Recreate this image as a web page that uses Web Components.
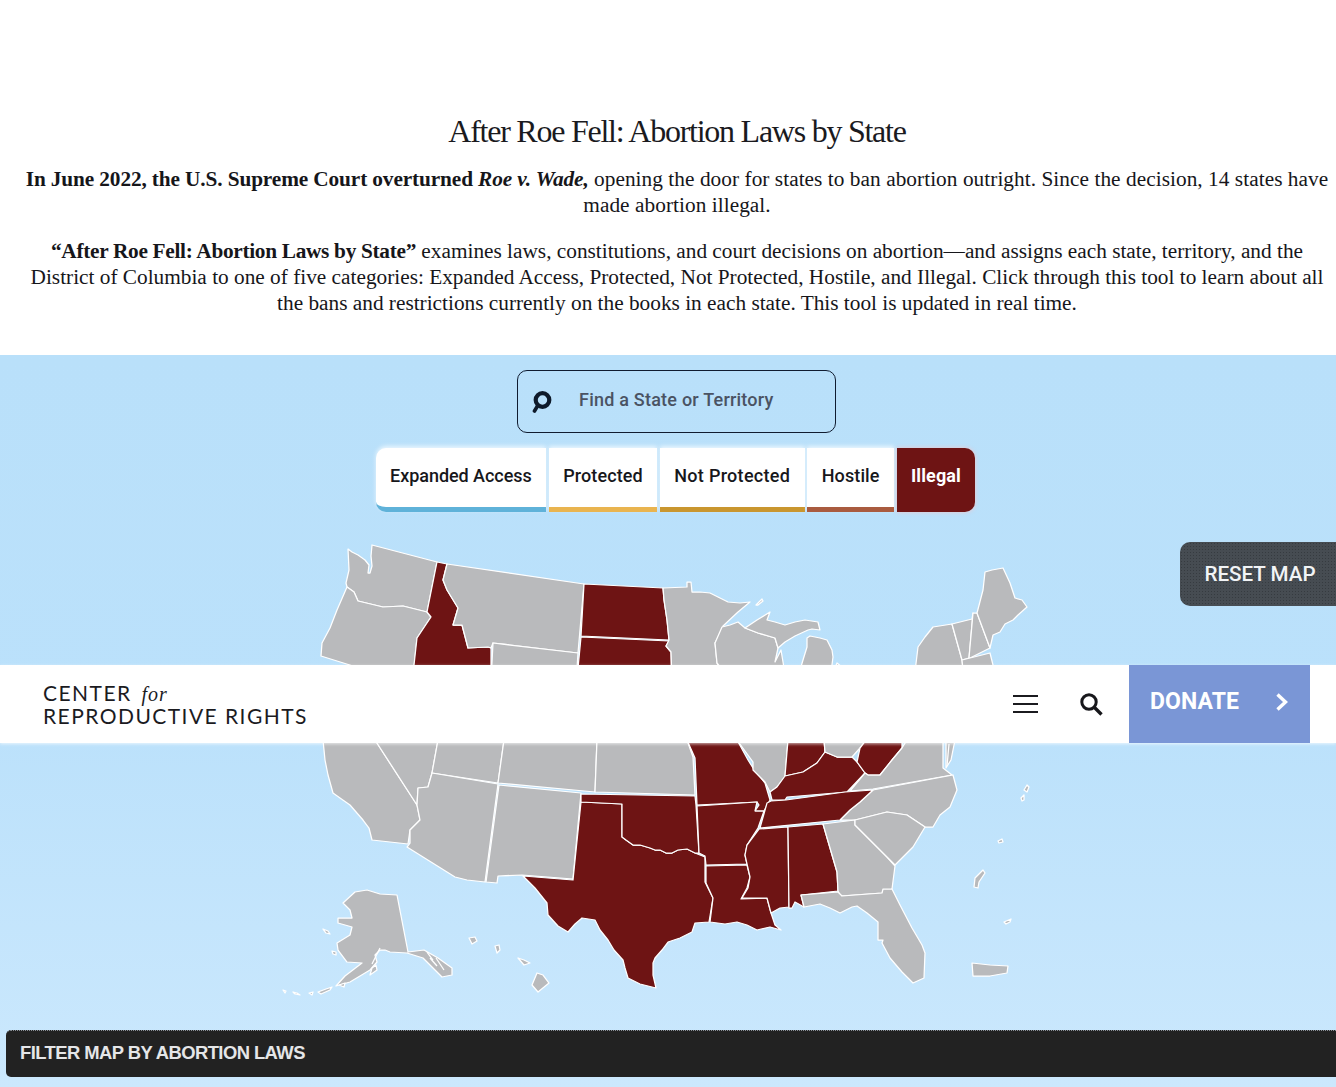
<!DOCTYPE html>
<html lang="en">
<head>
<meta charset="utf-8">
<title>After Roe Fell: Abortion Laws by State</title>
<style>
  html, body { margin: 0; background: #fff; }
  body { position: relative; height: 1087px; overflow: hidden; }
  intro-block p:first-of-type { letter-spacing: .05px; }
  intro-block p:first-of-type b { letter-spacing: -.12px; }
  intro-block p:last-of-type b { letter-spacing: -.3px; }
</style>
</head>
<body>
<intro-block>
  <span slot="title">After Roe Fell: Abortion Laws by State</span>
  <p><b>In June 2022, the U.S. Supreme Court overturned <i>Roe v. Wade,</i></b> opening the door for states to ban abortion outright. Since the decision, 14 states have made abortion illegal.</p>
  <p><b>“After Roe Fell: Abortion Laws by State”</b> examines laws, constitutions, and court decisions on abortion—and assigns each state, territory, and the<br>District of Columbia to one of five categories: Expanded Access, Protected, Not Protected, Hostile, and Illegal. Click through this tool to learn about all the bans and restrictions currently on the books in each state. This tool is updated in real time.</p>
</intro-block>
<map-section>
  <us-map slot="canvas"></us-map>
  <reset-button slot="overlay">RESET MAP</reset-button>
  <search-box placeholder="Find a State or Territory"></search-box>
  <filter-tabs>
    <filter-tab color="#5fb2d9" first>Expanded Access</filter-tab>
    <filter-tab color="#e9b44f">Protected</filter-tab>
    <filter-tab color="#c9962f" wide>Not Protected</filter-tab>
    <filter-tab color="#a95b3f">Hostile</filter-tab>
    <filter-tab color="#6e1414" active>Illegal</filter-tab>
  </filter-tabs>
  <filter-bar slot="footer">FILTER MAP BY ABORTION LAWS</filter-bar>
</map-section>
<site-header></site-header>

<script>
const SANS = '"Roboto", "Liberation Sans", sans-serif';

class IntroBlock extends HTMLElement {
  connectedCallback() {
    this.attachShadow({ mode: "open" }).innerHTML = `
      <style>
        :host { display: block; height: 355px; box-sizing: border-box; padding: 112px 6px 0 24px; text-align: center;
          font: 21.3px/26px "Liberation Serif", serif; color: #16161a; }
        h1 { margin: 0 0 16px; font: 400 32px/38px "Liberation Serif", serif; letter-spacing: -1.25px; color: #1a1a1e; }
        ::slotted(p) { margin: 0 0 20px; }
      </style>
      <h1><slot name="title"></slot></h1>
      <slot></slot>`;
  }
}

class MapSection extends HTMLElement {
  connectedCallback() {
    this.attachShadow({ mode: "open" }).innerHTML = `
      <style>
        :host { display: flex; flex-direction: column; position: relative; height: 732px;
          padding-top: 15px; box-sizing: border-box; background: linear-gradient(#b9e0fa 0%, #bbe1fb 50%, #cbe8fd 100%); }
        .content { position: relative; display: flex; flex-direction: column; align-items: center; gap: 15px; padding-left: 17px; }
        .footer { position: relative; margin-top: auto; padding: 0 0 10px 6px; }
      </style>
      <slot name="canvas"></slot>
      <slot name="overlay"></slot>
      <div class="content"><slot></slot></div>
      <div class="footer"><slot name="footer"></slot></div>`;
  }
}

class SearchBox extends HTMLElement {
  connectedCallback() {
    this.attachShadow({ mode: "open" }).innerHTML = `
      <style>
        :host { display: flex; align-items: center; gap: 27px; width: 319px; height: 63px; box-sizing: border-box;
          padding: 0 0 4px 13px; border: 1px solid #101c30; border-radius: 10px; }
        svg { flex: none; display: block; margin-top: 4px; }
        span { font: 500 18px/20px ${SANS}; letter-spacing: .22px; color: #4a5363; }
      </style>
      <svg width="21" height="22" viewBox="0 0 21 22">
        <circle cx="11.5" cy="9" r="6.8" fill="none" stroke="#0e1a2a" stroke-width="4.2"/>
        <path d="M6.5 15 3.5 20" stroke="#0e1a2a" stroke-width="3.6" stroke-linecap="round"/>
      </svg>
      <span>${this.getAttribute("placeholder")}</span>`;
  }
}

class FilterTabs extends HTMLElement {
  connectedCallback() {
    this.attachShadow({ mode: "open" }).innerHTML = `
      <style>:host { display: flex; gap: 2.5px; margin-left: -2px; }</style><slot></slot>`;
  }
}

class FilterTab extends HTMLElement {
  connectedCallback() {
    const color = this.getAttribute("color");
    const active = this.hasAttribute("active");
    const first = this.hasAttribute("first");
    this.attachShadow({ mode: "open" }).innerHTML = `
      <style>
        :host { display: flex; align-items: center; height: 64px; box-sizing: border-box; padding: 0 14.5px 4px;
          font: 500 18px/20px ${SANS}; letter-spacing: .1px;
          background: ${active ? color : "#fff"}; color: ${active ? "#fff" : "#17171b"};
          border-bottom: ${active ? "0" : `5px solid ${color}`};
          border-radius: ${first ? "10px 0 0 10px" : active ? "0 10px 10px 0" : "0"};
          box-shadow: ${active ? "0 0 4px rgba(255,190,190,.8)" : "0 -2px 4px rgba(255,255,255,.7)"}; }
        :host([first]) { padding: 0 14.5px 4px; letter-spacing: -.05px; }
        :host([wide]) { letter-spacing: .3px; }
        :host([active]) { padding-bottom: 8px; font-weight: 700; letter-spacing: .1px; }
      </style>
      <slot></slot>`;
  }
}

class ResetButton extends HTMLElement {
  connectedCallback() {
    this.attachShadow({ mode: "open" }).innerHTML = `
      <style>
        :host { position: absolute; top: 187px; right: 0; display: flex; align-items: center; justify-content: center;
          width: 156px; height: 64px; padding-left: 4px; box-sizing: border-box; border-radius: 10px 0 0 10px;
          font: 500 20.6px/24px ${SANS}; color: #f2f4f6; background-color: #464c52;
          background-image: radial-gradient(#363b40 .8px, transparent 1px); background-size: 3px 3px; }
      </style>
      <slot></slot>`;
  }
}

class FilterBar extends HTMLElement {
  connectedCallback() {
    this.attachShadow({ mode: "open" }).innerHTML = `
      <style>
        :host { display: flex; align-items: center; height: 47px; box-sizing: border-box; padding: 0 0 2px 14px;
          border-top: 1px dotted #8a9097; border-radius: 5px 0 0 5px; background: #222;
          font: 700 18.4px/22px "Liberation Sans", sans-serif; letter-spacing: -.55px; color: #e5e6e8; }
      </style>
      <slot></slot>`;
  }
}

class SiteHeader extends HTMLElement {
  connectedCallback() {
    this.attachShadow({ mode: "open" }).innerHTML = `
      <style>
        :host { position: absolute; top: 665px; left: 0; right: 0; height: 78px; display: flex; align-items: stretch;
          background: #fff; box-shadow: 0 1px 3px rgba(255,255,255,.7); }
        .logo { flex: 1; padding: 16px 0 0 43px; font: 400 21px/23px "Lato", "Noto Sans", sans-serif; letter-spacing: 1.45px; color: #1b1b1f; }
        .logo i { font: italic 20px/20px "Liberation Serif", serif; letter-spacing: 1px; margin-left: 3px; }
        .tools { display: flex; align-items: center; gap: 41px; margin-right: 26px; }
        .burger { display: flex; flex-direction: column; gap: 5.5px; width: 25px; }
        .burger span { height: 2.2px; background: #1b1b1f; }
        svg { display: block; }
        .donate { display: flex; align-items: center; justify-content: space-between; box-sizing: border-box; width: 181px;
          margin-right: 26px; padding: 0 21px 4px 21px; background: #7a96d6; color: #fff;
          font: 700 23px/26px ${SANS}; letter-spacing: .1px; }
      </style>
      <div class="logo">CENTER <i>for</i><br>REPRODUCTIVE RIGHTS</div>
      <div class="tools">
        <div class="burger"><span></span><span></span><span></span></div>
        <svg width="24" height="24" viewBox="0 0 24 24">
          <circle cx="10" cy="10" r="7.2" fill="none" stroke="#17171b" stroke-width="3"/>
          <path d="m15.5 15.5 7 7" stroke="#17171b" stroke-width="3.4"/>
        </svg>
      </div>
      <div class="donate">DONATE
        <svg width="14" height="20" viewBox="0 0 14 20"><path d="m2.5 2.5 8 7.5-8 7.5" fill="none" stroke="#fff" stroke-width="3.4"/></svg>
      </div>`;
  }
}

// page coordinates, the svg viewBox starts at the map section's top
const RED = "#6e1414";
const GRAY = "#b9babc";
const STATES = [
  [GRAY, "348,549 352,552 358,555 365,560 369,565 368,573 370,573 372,566 371,556 372,545 437,562 427,612 403,606 383,607 358,601 354,592 347,587 346,583 349,570"],
  [GRAY, "347,587 354,592 358,601 383,607 403,606 427,612 431,617 417,638 414,668 353,666 321,656 322,643 330,628 337,610"],
  [RED, "437,562 447,564 443,580 447,590 458,608 453,625 462,625 468,648 488,647 491,648 491,685 410,685 414,665 417,638 431,617 427,612"],
  [GRAY, "447,564 584,584 578,653 493,643 491,648 488,647 468,648 462,625 453,625 458,608 447,590 443,580"],
  [GRAY, "493,643 578,653 575,700 490,700"],
  [RED, "584,584 663,588 664,600 667,620 669,640 581,636"],
  [RED, "581,637 669,641 666,646 671,652 672,700 575,700"],
  [GRAY, "663,588 687,587 687,582 691,582 692,592 700,592 710,593 720,598 728,602 740,603 750,602 738,612 723,626 722,630 715,643 717,663 725,680 672,680 671,652 666,646 669,640 667,620 664,600"],
  [GRAY, "722,627 730,625 738,622 745,628 758,633 775,638 778,648 775,662 781,650 784,668 730,680 717,663 715,643"],
  [GRAY, "745,628 757,620 770,612 767,620 775,622 785,625 795,622 805,620 818,622 820,630 812,629 808,630 795,636 785,642 778,648 775,638 758,633"],
  [GRAY, "797,680 803,660 807,647 807,638 810,636 820,638 827,640 832,650 833,657 830,680"],
  [GRAY, "756,605 762,599 763,601 758,605"],
  [GRAY, "830,680 837,663 848,672"],
  [GRAY, "914,680 918,647 925,637 933,627 952,624 962,660 964,680"],
  [GRAY, "952,624 972,619 973,613 969,658 962,660"],
  [GRAY, "973,613 977,613 990,648 970,658 969,658"],
  [GRAY, "977,613 983,590 985,572 992,570 1003,568 1010,583 1015,598 1022,600 1027,607 1018,615 1013,620 1005,624 1000,632 993,635 990,648"],
  [GRAY, "962,660 990,653 993,665 995,680 964,680"],
  // below the header
  [GRAY, "323,740 375,740 417,805 420,820 410,830 408,844 372,840 369,828 363,820 350,805 340,798 333,793 328,775 325,760"],
  [GRAY, "375,740 438,740 432,773 428,787 418,788 417,805"],
  [GRAY, "438,740 504,740 498,783 432,773"],
  [GRAY, "504,740 597,740 595,792 498,783"],
  [GRAY, "597,740 687,740 693,757 695,795 595,792"],
  [GRAY, "432,773 498,784 485,882 467,880 455,877 407,847 410,843 410,830 420,820 417,805 418,788 428,787"],
  [GRAY, "499,785 581,793 573,879 522,875 498,876 497,883 486,882"],
  [RED, "581,802 622,804 622,837 626,840 633,845 640,845 650,848 655,850 660,850 666,853 672,853 678,850 687,849 695,853 705,857 705,882 713,898 709,922 695,923 692,932 680,938 668,942 662,950 655,958 653,963 653,975 656,988 640,984 628,978 625,968 623,960 614,950 608,940 600,930 595,920 582,918 575,924 568,932 558,926 548,915 547,903 535,888 523,876 573,880"],
  [RED, "581,794 695,796 696,805 699,853 695,853 687,849 678,850 672,853 666,853 660,850 655,850 650,848 640,845 633,845 626,840 622,837 622,804 581,802"],
  [RED, "687,740 737,740 748,760 753,768 765,783 770,800 764,811 755,811 759,805 757,802 697,805 695,758"],
  [GRAY, "737,740 788,740 785,777 777,787 770,792 765,782 753,770 753,762"],
  [RED, "788,740 824,740 825,752 817,763 803,772 785,776"],
  [RED, "772,800 770,792 777,787 785,776 803,772 817,763 825,752 837,757 852,757 857,762 865,773 847,792 787,797 785,800"],
  [GRAY, "824,740 866,740 860,748 852,757 837,757 825,752"],
  [RED, "866,740 902,740 902,748 892,760 880,775 868,775 865,773 857,762 860,748"],
  [GRAY, "907,740 943,740 943,768 952,775 873,789 850,791 865,773 868,775 880,775 892,760 902,748"],
  [GRAY, "946,740 955,740 951,760 946,768"],
  [GRAY, "953,775 957,790 950,807 940,815 933,827 925,827 907,815 887,812 855,820 840,820 850,810 860,802 873,790"],
  [RED, "760,828 767,803 771,801 786,800 845,792 873,790 860,802 850,810 840,820"],
  [RED, "697,806 757,802 755,811 764,811 758,828 747,845 745,855 747,864 706,865 705,856 699,853"],
  [RED, "706,866 747,865 750,877 747,888 741,899 767,898 771,913 775,925 781,930 770,927 757,930 747,925 737,922 725,924 710,922 713,898 706,883"],
  [RED, "759,829 788,827 789,907 780,908 771,913 767,898 742,898 748,888 750,877 747,864 745,855 747,845"],
  [RED, "788,827 823,824 837,872 838,891 801,895 804,907 795,902 792,908 789,908"],
  [GRAY, "823,824 855,820 855,825 875,845 887,857 895,866 892,889 882,893 840,896 838,891 837,872"],
  [GRAY, "855,820 887,812 907,815 925,827 913,847 895,865 887,857 875,845 855,825"],
  [GRAY, "801,895 838,892 842,896 882,893 883,889 892,889 900,905 912,928 922,945 925,953 924,978 913,983 902,972 890,958 882,943 883,940 878,940 878,922 867,913 857,906 852,907 840,913 830,908 820,904 804,907"],
  [GRAY, "972,963 990,965 1008,966 1007,973 990,976 973,976"],
  // Alaska and its islands
  [GRAY, "343,903 355,892 367,890 380,894 397,895 408,952 424,950 438,958 452,968 452,975 442,977 423,958 407,953 390,952 385,950 380,950 375,955 377,962 370,970 350,982 336,986 345,976 362,963 347,962 338,950 337,943 350,935 352,927 338,923 338,918 352,918 350,910"],
  [GRAY, "372,968 376,965 377,970 370,975"],
  [GRAY, "323,929 328,931 330,934 326,933"],
  [GRAY, "332,951 336,952 336,955 333,954"],
  [GRAY, "283,990 286,991 285,993"],
  [GRAY, "293,992 297,993 300,995 295,994"],
  [GRAY, "309,993 313,992 312,995"],
  [GRAY, "318,992 326,989 332,987 330,990 321,994"],
  [GRAY, "339,985 345,983 344,987"],
  // Hawaii
  [GRAY, "537,973 543,975 549,983 538,992 532,985"],
  [GRAY, "469,938 475,937 477,941 472,944"],
  [GRAY, "495,946 499,945 500,950 497,953"],
  [GRAY, "518,958 524,960 530,963 524,965"],
  // territories
  [GRAY, "974,887 975,878 983,870 985,873 979,882 978,888"],
  [GRAY, "1024,790 1027,785 1029,787 1027,792"],
  [GRAY, "1021,798 1024,795 1024,800 1022,801"],
  [GRAY, "998,841 1002,839 1003,842 999,843"],
  [GRAY, "1004,922 1011,919 1010,922 1006,924"]
];
const ISLAND_LINES = ["M430 958 437 966", "M436 958 444 970", "M427 952 433 960", "M380 948 372 964", "M949 744 947 766"];

class UsMap extends HTMLElement {
  connectedCallback() {
    const shapes = STATES.map(([fill, points]) => `<polygon fill="${fill}" points="${points}"/>`).join("");
    const lines = ISLAND_LINES.map((d) => `<path d="${d}"/>`).join("");
    this.attachShadow({ mode: "open" }).innerHTML = `
      <style>
        :host { position: absolute; inset: 0; display: block; }
        svg { display: block; }
        polygon { stroke: #fff; stroke-width: 1.25; stroke-linejoin: round; }
        path { stroke: #fff; stroke-width: 1.25; fill: none; }
      </style>
      <svg width="1336" height="732" viewBox="0 355 1336 732">${shapes}${lines}</svg>`;
  }
}

customElements.define("intro-block", IntroBlock);
customElements.define("map-section", MapSection);
customElements.define("search-box", SearchBox);
customElements.define("filter-tabs", FilterTabs);
customElements.define("filter-tab", FilterTab);
customElements.define("reset-button", ResetButton);
customElements.define("filter-bar", FilterBar);
customElements.define("site-header", SiteHeader);
customElements.define("us-map", UsMap);
</script>
</body>
</html>
